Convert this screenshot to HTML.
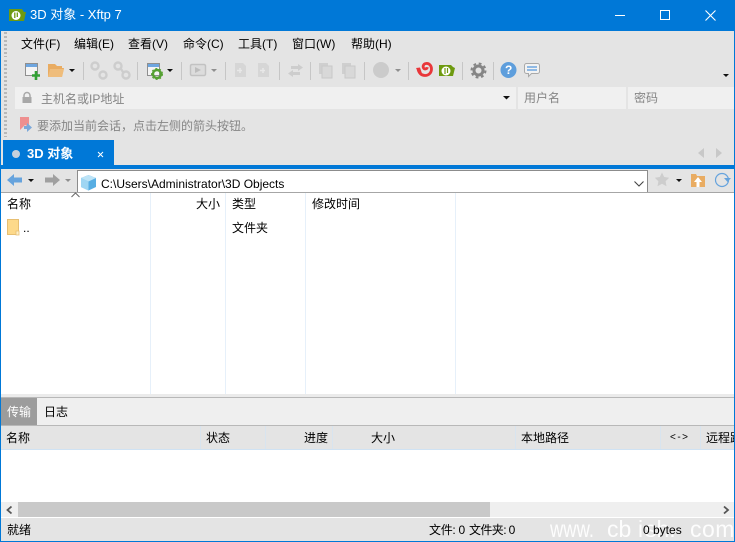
<!DOCTYPE html>
<html><head><meta charset="utf-8">
<style>
html,body{margin:0;padding:0;width:735px;height:542px;overflow:hidden;background:#fff}
body{position:relative;font:12px/16px "Liberation Sans","Noto Sans CJK SC",sans-serif;color:#000}
.r{position:absolute}
.t{position:absolute;white-space:nowrap}
svg{position:absolute;overflow:visible}
.g{color:#858585}
.w{position:absolute;top:515px;font-size:23px;line-height:28px;color:rgba(255,255,255,.9);white-space:nowrap;transform-origin:left center}
</style></head><body>
<!-- frame -->
<div class="r" style="left:0;top:0;width:735px;height:31px;background:#0078d7"></div>
<div class="r" style="left:1px;top:31px;width:733px;height:134px;background:#e4e4e4"></div>
<div class="r" style="left:0;top:31px;width:1px;height:511px;background:#0078d7"></div>
<div class="r" style="left:734px;top:31px;width:1px;height:511px;background:#0078d7"></div>
<div class="r" style="left:0;top:541px;width:735px;height:1px;background:#0078d7"></div>
<!-- title -->
<svg style="left:9px;top:9px" width="17" height="13" viewBox="0 0 17 13"><path d="M0 0H13L15 3 17 3 15 12H0Z" fill="#6e9a10"/><circle cx="7" cy="6.500" r="4.500" fill="#fff"/><path d="M5.800 3.500V9M8.300 3.500V8" stroke="#6e9a10" stroke-width="1.300"/></svg>
<div class="t" style="left:30px;top:7px;font-size:13px;color:#fff">3D 对象 - Xftp 7</div>
<div class="r" style="left:615px;top:15px;width:10px;height:1px;background:#fff"></div>
<div class="r" style="left:660px;top:10px;width:8px;height:8px;border:1px solid #fff"></div>
<svg style="left:705px;top:10px" width="11" height="11"><path d="M.5.500L10.500 10.500M10.500.500L.5 10.500" stroke="#fff" stroke-width="1.100"/></svg>
<!-- grip -->
<div class="r" style="left:4px;top:32px;width:3px;height:25px;background:repeating-linear-gradient(#b8b8b8 0 2px,transparent 2px 4px)"></div>
<div class="r" style="left:4px;top:60px;width:3px;height:77px;background:repeating-linear-gradient(#b8b8b8 0 2px,transparent 2px 4px)"></div>
<!-- menu -->
<div class="t" style="left:21px;top:36px">文件(F)</div>
<div class="t" style="left:74px;top:36px">编辑(E)</div>
<div class="t" style="left:128px;top:36px">查看(V)</div>
<div class="t" style="left:183px;top:36px">命令(C)</div>
<div class="t" style="left:238px;top:36px">工具(T)</div>
<div class="t" style="left:292px;top:36px">窗口(W)</div>
<div class="t" style="left:351px;top:36px">帮助(H)</div>
<!-- toolbar -->
<svg style="left:0;top:0" width="735" height="100">
<!-- new session -->
<rect x="25.500" y="63.500" width="12" height="12" fill="#f4f4f4" stroke="#8f8f8f"/><rect x="26" y="64" width="11" height="3" fill="#6ea6e0"/>
<path d="M36 71v9M32 75.500h8" stroke="#32a035" stroke-width="2.600"/>
<!-- folder -->
<path d="M48 64h7l2 2h5v2h2l-2 9H48Z" fill="#e9ac62"/><path d="M50 69h14l-2 8H48Z" fill="#efbd7c"/>
<path d="M69 69h6l-3 3Z" fill="#111"/>
<path d="M83.500 62v18M137.500 62v18M181.500 62v18M225.500 62v18M279.500 62v18M310.500 62v18M364.500 62v18M408.500 62v18M462.500 62v18M493.500 62v18" stroke="#c6c6c6"/>
<!-- link icons -->
<g fill="none" stroke="#cdcdcd" stroke-width="2.400"><circle cx="95" cy="66" r="3.500"/><circle cx="103" cy="75" r="3.500"/><circle cx="118" cy="66" r="3.500"/><circle cx="126" cy="75" r="3.500"/><path d="M121 69l2 3"/></g>
<!-- session settings -->
<rect x="147.500" y="63.500" width="12" height="12" fill="#f4f4f4" stroke="#8f8f8f"/><rect x="148" y="64" width="11" height="3" fill="#6ea6e0"/>
<circle cx="157" cy="74" r="4" fill="none" stroke="#55a032" stroke-width="2.400"/><circle cx="157" cy="74" r="5.500" fill="none" stroke="#55a032" stroke-width="1" stroke-dasharray="2 2"/>
<path d="M167 69h6l-3 3Z" fill="#111"/>
<!-- play -->
<rect x="190.500" y="64.500" width="15" height="11" rx="1.500" fill="#dcdcdc" stroke="#c2c2c2" stroke-width="1.500"/><path d="M195 67l6 3-6 3Z" fill="#bdbdbd"/>
<path d="M211 69h6l-3 3Z" fill="#8f8f8f"/>
<!-- docs -->
<path d="M235 63h8l3 3v11h-11Z" fill="#d6d6d6"/><path d="M237 70.500h5M240 68v5" stroke="#e8e8e8" stroke-width="1.500"/>
<path d="M258 63h8l3 3v11h-11Z" fill="#d6d6d6"/><path d="M260 70.500h5M263 68v5" stroke="#e8e8e8" stroke-width="1.500"/>
<!-- arrows -->
<path d="M291 66h7v-2l5 3.500-5 3.500v-2h-7Z" fill="#cdcdcd"/><path d="M300 72h-7v-2l-5 3.500 5 3.500v-2h7Z" fill="#cdcdcd"/>
<!-- copy -->
<rect x="319" y="63" width="9" height="11" fill="#cfcfcf"/><rect x="322" y="66" width="10" height="12" fill="#d8d8d8" stroke="#c8c8c8"/>
<rect x="342" y="63" width="9" height="11" fill="#cfcfcf"/><rect x="345" y="66" width="10" height="12" fill="#d8d8d8" stroke="#c8c8c8"/>
<circle cx="381" cy="70" r="8" fill="#cbcbcb"/><path d="M395 69h6l-3 3Z" fill="#8f8f8f"/>
<!-- xshell snail -->
<path d="M418 68.500c.5 4.500 3.500 7 7 7 4 0 6.500-3 6.500-6.500 0-3.500-2.500-6-5.500-5.500-2.500.3-3.500 2.800-2.500 4.500 1 1.500 3.500 1.200 3.800-.8" fill="none" stroke="#e9373a" stroke-width="2.800"/>
<path d="M416 68l4-.5 2 6-2 1.500Z" fill="#e9373a"/>
<!-- xftp -->
<path d="M439 65h12l2 2 2 1-2 8h-14Z" fill="#6e9a10"/><circle cx="446" cy="71" r="4.500" fill="#fff"/><path d="M445 68v6M447.500 68v5" stroke="#6e9a10" stroke-width="1.200"/>
<!-- gear -->
<circle cx="478.500" cy="70.500" r="4.500" fill="none" stroke="#858585" stroke-width="3"/><circle cx="478.500" cy="70.500" r="7" fill="none" stroke="#858585" stroke-width="2" stroke-dasharray="2.800 2.700"/>
<!-- help -->
<circle cx="508.500" cy="70" r="8" fill="#5e9edc"/>
<!-- chat -->
<path d="M526.500 63.500h11a2 2 0 0 1 2 2v6a2 2 0 0 1-2 2h-6l-3 3v-3h-2a2 2 0 0 1-2-2v-6a2 2 0 0 1 2-2Z" fill="#f2f2f2" stroke="#a9a9a9"/>
<path d="M527 67h10M527 70h10" stroke="#6ea6e0" stroke-width="1.500"/>
<path d="M723 74h6l-3 3Z" fill="#111"/>
</svg>
<div class="t" style="left:505px;top:62px;font:bold 12px/16px 'Liberation Sans',sans-serif;color:#fff">?</div>
<!-- address row -->
<div class="r" style="left:15px;top:87px;width:501px;height:22px;background:#f0f0f0"></div>
<div class="r" style="left:518px;top:87px;width:108px;height:22px;background:#f0f0f0"></div>
<div class="r" style="left:628px;top:87px;width:106px;height:22px;background:#f0f0f0"></div>
<svg style="left:21px;top:92px" width="12" height="12"><path d="M3 5V3.500a3 3 0 0 1 6 0V5" fill="none" stroke="#a8a8a8" stroke-width="1.500"/><rect x="1.500" y="5" width="9" height="6" fill="#a8a8a8"/></svg>
<div class="t g" style="left:41px;top:91px">主机名或IP地址</div>
<svg style="left:503px;top:96px" width="8" height="5"><path d="M0 0h7L3.500 3.500Z" fill="#111"/></svg>
<div class="t g" style="left:524px;top:90px">用户名</div>
<div class="t g" style="left:634px;top:90px">密码</div>
<!-- hint -->
<svg style="left:20px;top:117px" width="13" height="16"><path d="M0 0h9v10l-4-2-2 2-3 3Z" fill="#ee8f8f"/><path d="M4 9h3V6l5 4.500-5 4.500v-3H4Z" fill="#7ba8da"/></svg>
<div class="t g" style="left:37px;top:118px">要添加当前会话，点击左侧的箭头按钮。</div>
<!-- tabs -->
<div class="r" style="left:3px;top:140px;width:111px;height:25px;background:#0078d7"></div>
<div class="r" style="left:12px;top:150px;width:8px;height:8px;border-radius:50%;background:#c6d0dc"></div>
<div class="t" style="left:27px;top:146px;font-size:13px;font-weight:bold;color:#fff">3D 对象</div>
<svg style="left:97px;top:151px" width="7" height="7"><path d="M1 1l5 5M6 1L1 6" stroke="#fff"/></svg>
<svg style="left:698px;top:148px" width="24" height="10"><path d="M6 0v10L0 5ZM18 0v10l6-5Z" fill="#c8c8c8"/></svg>
<div class="r" style="left:1px;top:165px;width:733px;height:4px;background:#0078d7"></div>
<!-- nav row -->
<div class="r" style="left:1px;top:169px;width:733px;height:24px;background:#e4e4e4"></div>
<svg style="left:0;top:169px" width="735" height="24">
<path d="M7 11l7-6v3.500h8v5h-8V17Z" fill="#66a3dd"/><path d="M28 10h6l-3 3Z" fill="#111"/>
<path d="M60 11l-7-6v3.500h-8v5h8V17Z" fill="#a0a0a0"/><path d="M65 10h6l-3 3Z" fill="#8f8f8f"/>
<path d="M662 3.500l2.200 4.500 5 .7-3.600 3.500.9 5-4.500-2.400-4.500 2.400.9-5-3.600-3.500 5-.7Z" fill="#cdcdcd"/><path d="M676 10h6l-3 3Z" fill="#111"/>
<path d="M691 5h5l1 2h8v11h-14Z" fill="#e9ac62"/><path d="M698 8l4 5h-2.500v5h-3v-5H694Z" fill="#fff"/>
<circle cx="722" cy="11" r="6.500" fill="none" stroke="#66a3dd" stroke-width="1.200"/><path d="M724 9h7l-3.500 4Z" fill="#66a3dd"/>
</svg>
<div class="r" style="left:77px;top:170px;width:569px;height:22px;background:#fff;border:1px solid #8c8c8c;border-width:1px 1px 0 1px"></div>
<svg style="left:80px;top:174px" width="17" height="17"><path d="M8.500 1L16 4v9l-7.500 3.500L1 13V4Z" fill="#57aee3"/><path d="M1 4l7.500 3.500V16.500L1 13Z" fill="#9fd6f3"/><path d="M8.500 1L16 4 8.500 7.500 1 4Z" fill="#bde4f7"/></svg>
<div class="t" style="left:101px;top:176px;font-size:12px">C:\Users\Administrator\3D Objects</div>
<svg style="left:634px;top:181px" width="10" height="6"><path d="M.5.500L5 5 9.500.500" fill="none" stroke="#444" stroke-width="1.100"/></svg>
<div class="r" style="left:1px;top:192px;width:733px;height:1px;background:#a6a6a6"></div>
<!-- list -->
<svg style="left:71px;top:192px" width="9" height="6"><path d="M.5 5L4.500 1 8.500 5" fill="none" stroke="#666"/></svg>
<div class="r" style="left:150px;top:193px;width:1px;height:201px;background:#e6f0fa"></div>
<div class="r" style="left:225px;top:193px;width:1px;height:201px;background:#e6f0fa"></div>
<div class="r" style="left:305px;top:193px;width:1px;height:201px;background:#e6f0fa"></div>
<div class="r" style="left:455px;top:193px;width:1px;height:201px;background:#e6f0fa"></div>
<div class="t" style="left:7px;top:196px">名称</div>
<div class="t" style="left:196px;top:196px">大小</div>
<div class="t" style="left:232px;top:196px">类型</div>
<div class="t" style="left:312px;top:196px">修改时间</div>
<svg style="left:7px;top:219px" width="13" height="16"><path d="M.5.500h11v15H.5Z" fill="#fdd98a" stroke="#e7bf72"/><path d="M9 12h3v4H9Z" fill="#fff0c8" stroke="#e7bf72" stroke-width=".8"/></svg>
<div class="t" style="left:23px;top:220px">..</div>
<div class="t" style="left:232px;top:220px">文件夹</div>
<!-- lower -->
<div class="r" style="left:1px;top:394px;width:733px;height:3px;background:#ebebeb"></div>
<div class="r" style="left:1px;top:397px;width:733px;height:1px;background:#b8b8b8"></div>
<div class="r" style="left:1px;top:398px;width:733px;height:27px;background:#efefef"></div>
<div class="r" style="left:1px;top:398px;width:36px;height:27px;background:#9c9c9c"></div>
<div class="t" style="left:7px;top:404px;color:#fff">传输</div>
<div class="t" style="left:44px;top:404px">日志</div>
<div class="r" style="left:1px;top:425px;width:733px;height:1px;background:#b8b8b8"></div>
<div class="r" style="left:1px;top:426px;width:733px;height:23px;background:#e4e4e4"></div>
<div class="r" style="left:1px;top:449px;width:733px;height:1px;background:#cfe2f3"></div>
<div class="r" style="left:200px;top:426px;width:1px;height:23px;background:#d8e4ef"></div>
<div class="r" style="left:265px;top:426px;width:1px;height:23px;background:#d8e4ef"></div>
<div class="r" style="left:332px;top:426px;width:1px;height:23px;background:#d8e4ef"></div>
<div class="r" style="left:515px;top:426px;width:1px;height:23px;background:#d8e4ef"></div>
<div class="r" style="left:660px;top:426px;width:1px;height:23px;background:#d8e4ef"></div>
<div class="r" style="left:700px;top:426px;width:1px;height:23px;background:#d8e4ef"></div>
<div class="t" style="left:6px;top:430px">名称</div>
<div class="t" style="left:206px;top:430px">状态</div>
<div class="t" style="left:304px;top:430px">进度</div>
<div class="t" style="left:371px;top:430px">大小</div>
<div class="t" style="left:521px;top:430px">本地路径</div>
<div class="t" style="left:670px;top:430px;font-size:10px;letter-spacing:1.500px">&lt;-&gt;</div>
<div class="r" style="left:701px;top:426px;width:33px;height:23px;overflow:hidden"><div class="t" style="left:5px;top:4px">远程路径</div></div>
<!-- scrollbar -->
<div class="r" style="left:1px;top:502px;width:733px;height:15px;background:#efefef"></div>
<div class="r" style="left:18px;top:502px;width:472px;height:15px;background:#c9c9c9"></div>
<svg style="left:6px;top:506px" width="723" height="8"><path d="M5.500.500L1.500 4l4 3.500" fill="none" stroke="#555" stroke-width="1.800"/><path d="M718 .5l4 3.500-4 3.500" fill="none" stroke="#555" stroke-width="1.800"/></svg>
<!-- status -->
<div class="r" style="left:1px;top:518px;width:733px;height:23px;background:#e4e4e4"></div>
<div class="t" style="left:7px;top:522px">就绪</div>
<div class="t" style="left:429px;top:522px;letter-spacing:-.3px">文件: 0</div>
<div class="t" style="left:469px;top:522px;letter-spacing:-.6px">文件夹: 0</div>
<!-- watermark -->
<div class="w" style="left:550px;transform:scaleX(.8)">www.</div>
<div class="w" style="left:607px">cb</div>
<div class="w" style="left:638px">i</div>
<div class="w" style="left:645px">sh.</div>
<div class="w" style="left:690px;letter-spacing:.5px">com</div>
<div class="t" style="left:643px;top:522px">0 bytes</div>
</body></html>
